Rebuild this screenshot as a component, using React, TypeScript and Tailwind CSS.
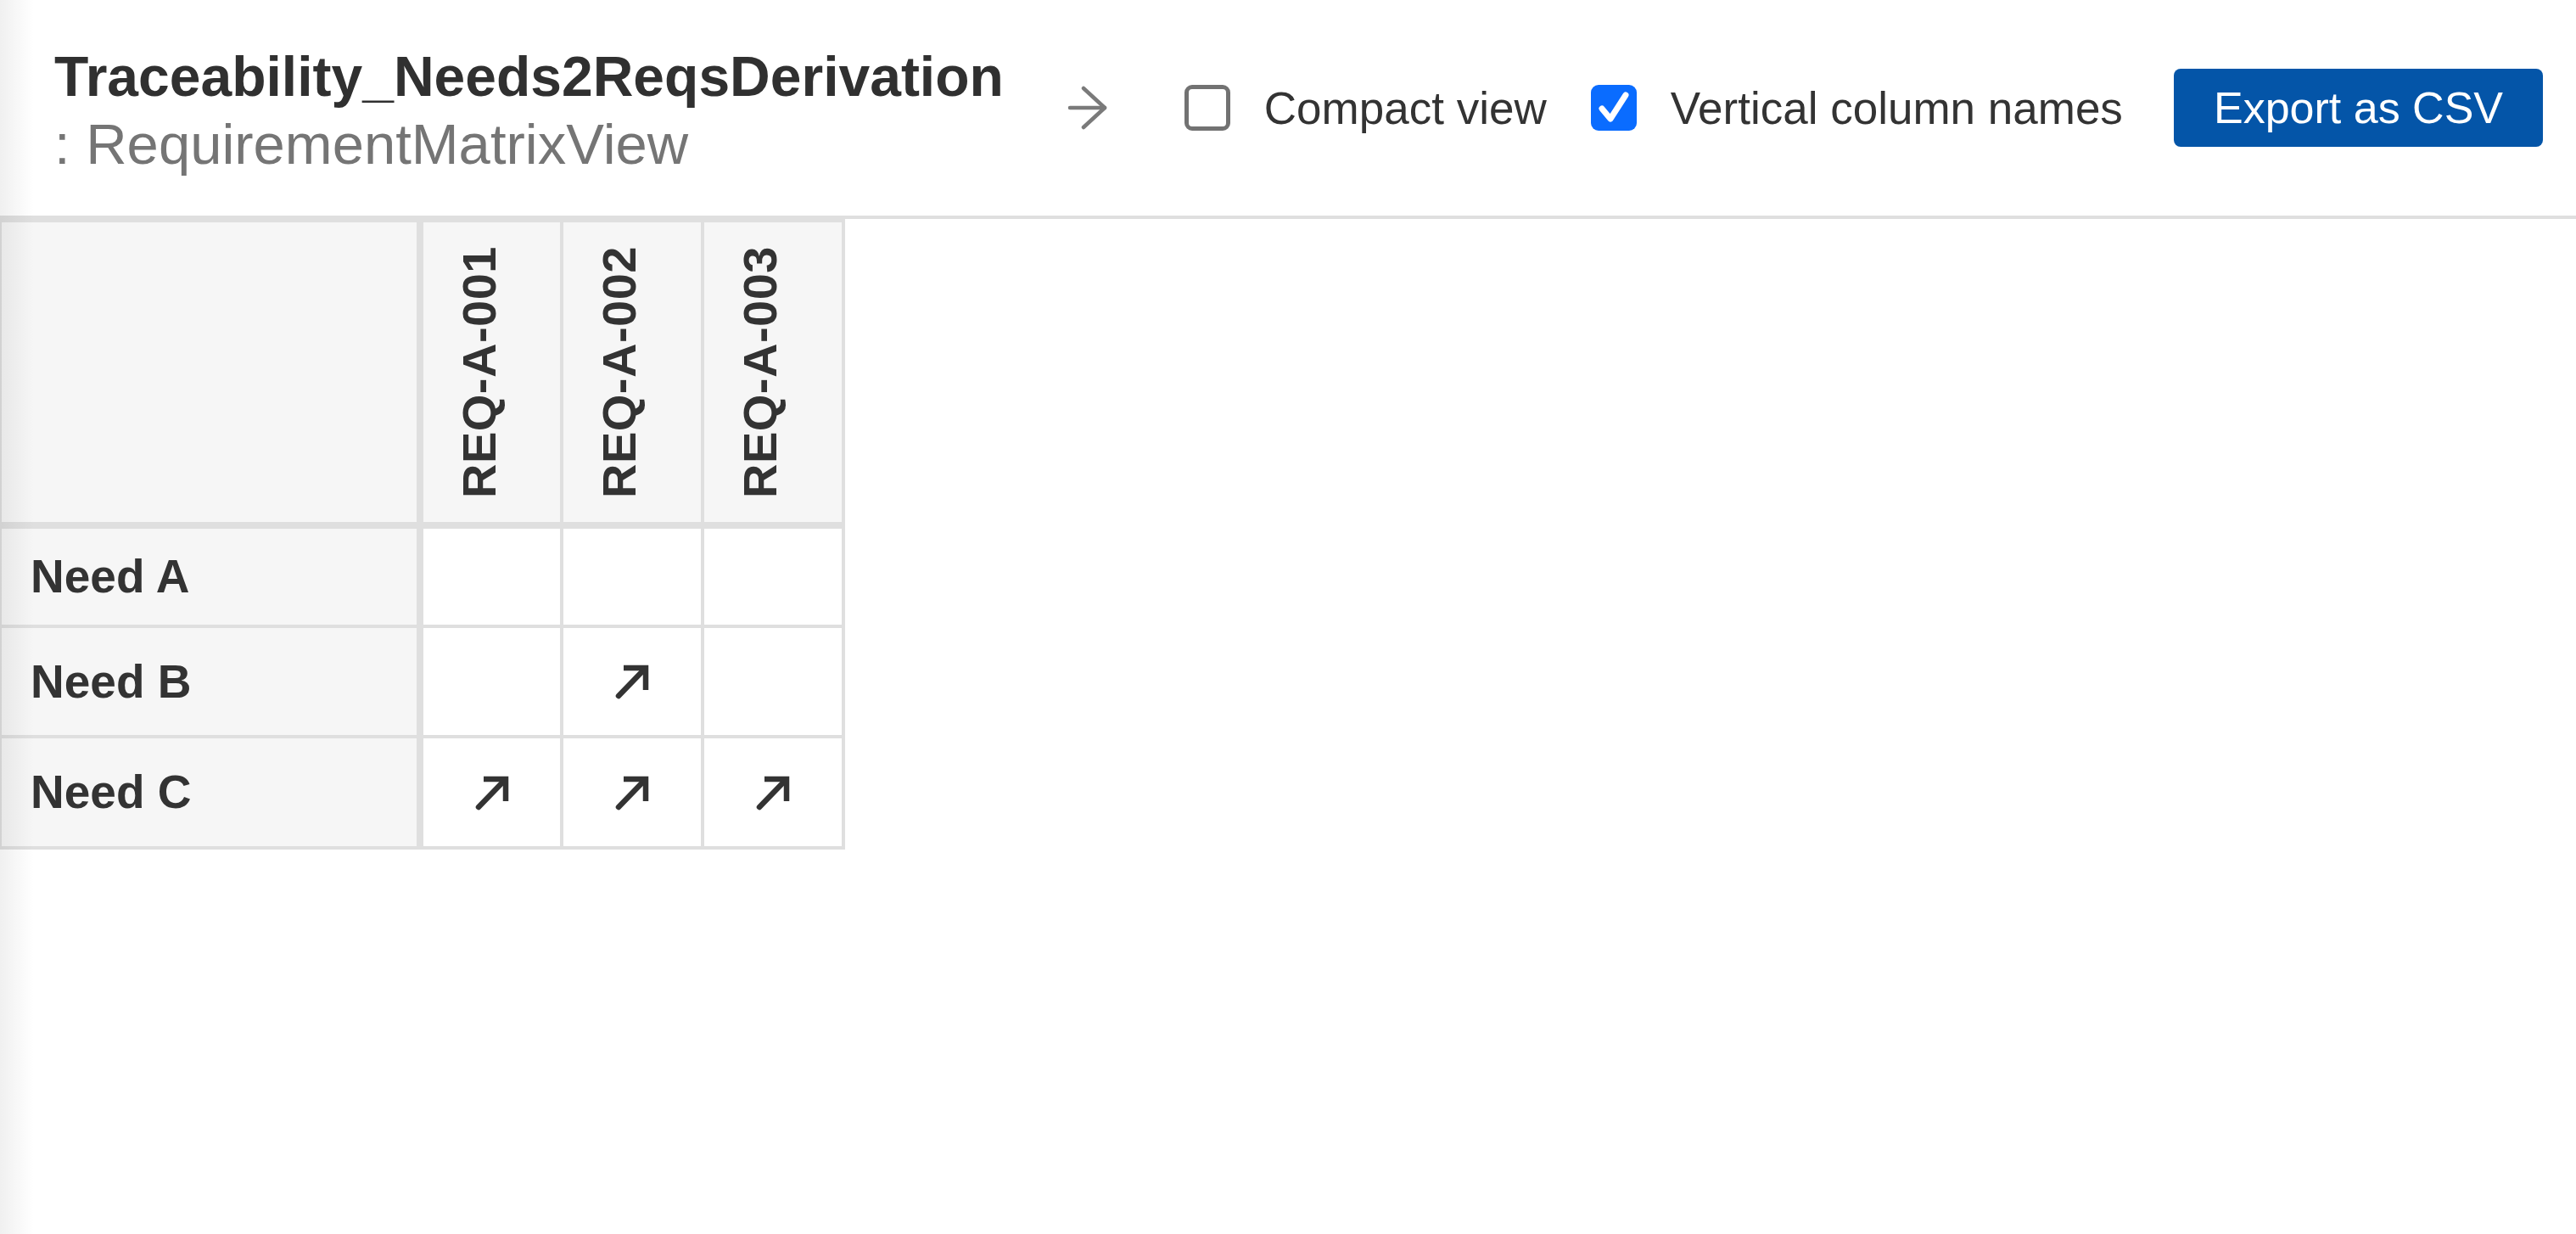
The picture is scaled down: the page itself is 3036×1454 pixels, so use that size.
import React from 'react';

const columns = [
  { id: 'REQ-A-001', width: 'w-[165px]' },
  { id: 'REQ-A-002', width: 'w-[166px]' },
  { id: 'REQ-A-003', width: 'w-[166px]' },
];

const rows = [
  { name: 'Need A', height: 'h-[117px]', links: [false, false, false] },
  { name: 'Need B', height: 'h-[130px]', links: [false, true, false] },
  { name: 'Need C', height: 'h-[131px]', links: [true, true, true] },
];

// little "derives" arrow shown in a linked cell
const TraceArrow = () => (
  <svg width="44" height="44" viewBox="0 0 44 44" fill="none" stroke="#333333" strokeWidth="6.5">
    <path d="M6 39 L37 7" strokeLinecap="round" />
    <path d="M12 6 H38 V32" strokeLinejoin="miter" />
  </svg>
);

const NextArrow = () => (
  <svg width="48" height="52" viewBox="0 0 48 52" fill="none" stroke="#7a7a7a" strokeWidth="4.5" strokeLinecap="round" strokeLinejoin="round" className="ml-[75px] shrink-0">
    <path d="M3 26 H44" />
    <path d="M19 3 L44 26 L19 49" />
  </svg>
);

const Checkbox = ({ checked, label, className }: { checked: boolean; label: string; className?: string }) => (
  <label className={'flex items-center shrink-0 ' + (className || '')}>
    {checked ? (
      <span className="flex w-[54px] h-[54px] rounded-[9px] bg-[#0a6cff]">
        <svg width="54" height="54" viewBox="0 0 54 54" fill="none" stroke="#ffffff" strokeWidth="7" strokeLinecap="round" strokeLinejoin="round">
          <path d="M13 28 L23 40 L41 12" />
        </svg>
      </span>
    ) : (
      <span className="block w-[54px] h-[54px] rounded-[9px] border-[5px] border-[#727272] bg-white" />
    )}
    <span className="ml-[40px] text-[53px] leading-none text-[#333333] whitespace-nowrap">{label}</span>
  </label>
);

export default function App() {
  return (
    <div className="relative min-h-screen bg-white font-['Liberation_Sans',Arial,sans-serif]">
      {/* soft shade along the left edge */}
      <div className="pointer-events-none absolute left-0 top-0 bottom-0 w-[40px] bg-linear-to-r from-black/[0.06] to-transparent" />

      <div className="flex items-center h-[258px] border-b-4 border-[#dfdfdf] pl-[64px] pr-[39px]">
        <div className="flex flex-col pt-[6px] shrink-0">
          <div className="text-[66px] leading-[79px] font-bold text-[#303030] whitespace-nowrap">
            Traceability_Needs2ReqsDerivation
          </div>
          <div className="text-[67px] leading-[79px] text-[#757575] whitespace-nowrap">
            : RequirementMatrixView
          </div>
        </div>
        <NextArrow />
        <Checkbox checked={false} label="Compact view" className="ml-[90px]" />
        <Checkbox checked={true} label="Vertical column names" className="ml-[52px]" />
        <button className="ml-auto w-[435px] h-[92px] rounded-[8px] bg-[#0455a8] text-white text-[52px] leading-none">
          Export as CSV
        </button>
      </div>

      <div className="flex flex-col w-fit border-t-4 border-l-2 border-[#dfdfdf]">
        <div className="flex">
          <div className="w-[497px] h-[361px] border-r-8 border-b-8 border-[#dfdfdf] bg-[#f6f6f6]" />
          {columns.map((col) => (
            <div
              key={col.id}
              className={col.width + ' h-[361px] border-r-4 border-b-8 border-[#dfdfdf] bg-[#f6f6f6] flex items-end pl-[38px] pb-[28px]'}
            >
              <span className="[writing-mode:vertical-rl] rotate-180 text-[56px] leading-[56px] tracking-[0.5px] font-bold text-[#333333] whitespace-nowrap">
                {col.id}
              </span>
            </div>
          ))}
        </div>

        {rows.map((row) => (
          <div key={row.name} className="flex">
            <div className={row.height + ' w-[497px] border-r-8 border-b-4 border-[#dfdfdf] bg-[#f6f6f6] flex items-center pl-[34px]'}>
              <span className="text-[55px] font-bold text-[#333333] whitespace-nowrap">{row.name}</span>
            </div>
            {columns.map((col, i) => (
              <div
                key={col.id}
                className={col.width + ' ' + row.height + ' border-r-4 border-b-4 border-[#dfdfdf] bg-white flex items-center justify-center'}
              >
                {row.links[i] && <TraceArrow />}
              </div>
            ))}
          </div>
        ))}
      </div>
    </div>
  );
}
